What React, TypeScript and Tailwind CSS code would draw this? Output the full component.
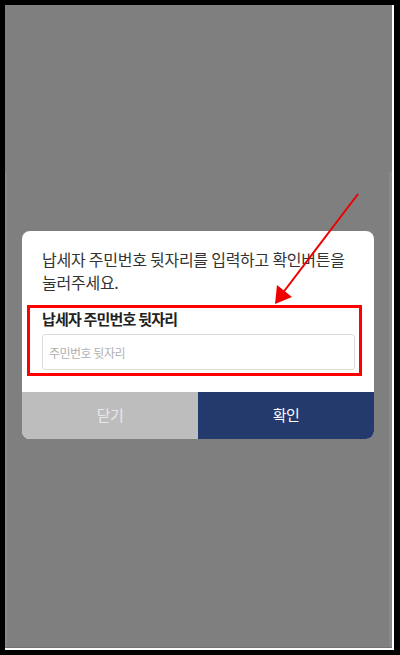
import React from "react";

const font = { fontFamily: '"Noto Sans CJK KR", "Noto Sans", sans-serif' };

export default function App() {
  return (
    <div
      className="relative w-[400px] h-[655px] bg-black pt-[5px] pl-[5px] pr-[6px] pb-[5px]"
      style={font}
    >
      <div className="flex h-full flex-col bg-white pr-[2px] pb-[2px]">
        <div className="flex flex-1 flex-col bg-[#7f7f7f] border-b border-[#727272]">
          <div className="h-[167px]" />
          <div className="flex-1 border-l-2 border-r-[3px] border-[#888888]">
            <div className="mx-auto mt-[59px] w-[352px] overflow-hidden rounded-[8px] bg-white">
              <p className="break-keep px-[20px] pt-[17px] text-[16px] leading-[23px] tracking-[-0.25px] text-[#333333]">
                납세자 주민번호 뒷자리를 입력하고 확인버튼을 눌러주세요.
              </p>

              <div className="mt-[11px] ml-[5px] mr-[12px] border-[3px] border-[#ff0000] pt-[1px] pb-[3px] pl-[12px] pr-[4px]">
                <label className="block break-keep text-[15px] font-bold leading-[20px] tracking-[-0.8px] text-[#222222]">
                  납세자 주민번호 뒷자리
                </label>
                <input
                  type="text"
                  placeholder="주민번호 뒷자리"
                  className="mt-[5px] block h-[36px] w-full rounded-[3px] border border-[#dcdcdc] px-[6px] text-[12px] tracking-[-0.5px] outline-none placeholder:text-[#b0b0b0]"
                  style={font}
                />
              </div>

              <div className="mt-[16px] flex h-[47px]">
                <button
                  className="flex w-1/2 items-center justify-center bg-[#bdbdbd] text-[15px] tracking-[-0.5px] text-[#e9e9e9]"
                  style={font}
                >
                  닫기
                </button>
                <button
                  className="flex w-1/2 items-center justify-center bg-[#243a6d] text-[15px] tracking-[-0.5px] text-white"
                  style={font}
                >
                  확인
                </button>
              </div>
            </div>
          </div>
        </div>
      </div>

      {/* annotation arrow */}
      <svg
        className="pointer-events-none absolute left-0 top-0"
        width="400"
        height="655"
        viewBox="0 0 400 655"
      >
        <line x1="358" y1="194" x2="282" y2="294" stroke="#ee0000" strokeWidth="2" />
        <polygon points="275,304 277,285 292,297" fill="#ee0000" />
      </svg>
    </div>
  );
}
